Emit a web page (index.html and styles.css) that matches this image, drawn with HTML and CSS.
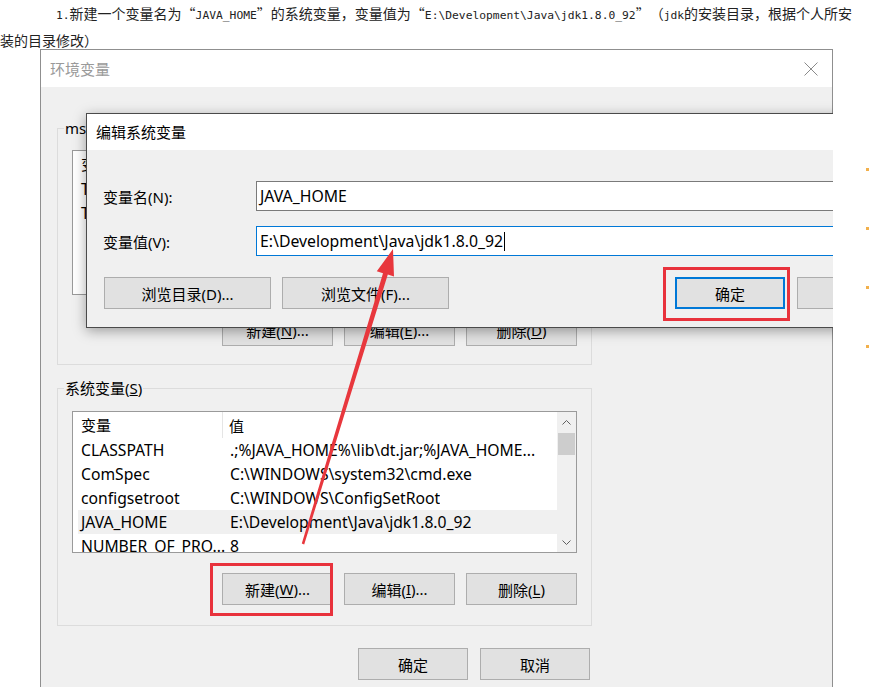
FILE: index.html
```html
<!DOCTYPE html>
<html lang="zh-CN">
<head>
<meta charset="utf-8">
<title>环境变量</title>
<link rel="stylesheet" href="styles.css">
</head>
<body>
<p class="intro"><span class="m">1.</span>新建一个变量名为“<span class="m">JAVA_HOME</span>”的系统变量，变量值为“<span class="m">E:\Development\Java\jdk1.8.0_92</span>”（<span class="m">jdk</span>的安装目录，根据个人所安<br>装的目录修改）</p>
<div class="stage">
  <div class="shot">
    <div class="win">
      <div class="win-title">
        <span class="win-caption">环境变量</span>
        <svg class="close" width="14" height="14" viewBox="0 0 14 14"><path d="M0.5 0.5 L13.5 13.5 M13.5 0.5 L0.5 13.5" stroke="#8a8a8a" stroke-width="1" fill="none"/></svg>
      </div>
      <div class="win-body">
        <div class="group group-user">
          <div class="group-label">mshsbc 的用户变量(<u>U</u>)</div>
          <div class="list list-user">
            <div class="lv-main">
              <div class="lv-head"><span class="c1">变量</span><span class="c2">值</span></div>
              <div class="lv-row"><span class="c1">TEMP</span><span class="c2">%USERPROFILE%\AppData\Local\Temp</span></div>
              <div class="lv-row"><span class="c1">TMP</span><span class="c2">%USERPROFILE%\AppData\Local\Temp</span></div>
            </div>
          </div>
          <div class="btn-row">
            <div class="btn">新建(<u>N</u>)...</div>
            <div class="btn">编辑(<u>E</u>)...</div>
            <div class="btn">删除(<u>D</u>)</div>
          </div>
        </div>
        <div class="group group-sys">
          <div class="group-label">系统变量(<u>S</u>)</div>
          <div class="list list-sys">
            <div class="lv-main">
              <div class="lv-head"><span class="c1">变量</span><span class="c2">值</span></div>
              <div class="lv-row"><span class="c1">CLASSPATH</span><span class="c2">.;%JAVA_HOME%\lib\dt.jar;%JAVA_HOME...</span></div>
              <div class="lv-row"><span class="c1">ComSpec</span><span class="c2">C:\WINDOWS\system32\cmd.exe</span></div>
              <div class="lv-row"><span class="c1">configsetroot</span><span class="c2">C:\WINDOWS\ConfigSetRoot</span></div>
              <div class="lv-row selected"><span class="c1">JAVA_HOME</span><span class="c2">E:\Development\Java\jdk1.8.0_92</span></div>
              <div class="lv-row"><span class="c1">NUMBER_OF_PRO...</span><span class="c2">8</span></div>
            </div>
            <div class="vscroll">
              <div class="sb-arrow"><svg width="9" height="5" viewBox="0 0 9 5"><polyline points="0.5,4.5 4.5,0.5 8.5,4.5" fill="none" stroke="#606060" stroke-width="1"/></svg></div>
              <div class="sb-thumb"></div>
              <div class="sb-track"></div>
              <div class="sb-arrow"><svg width="9" height="5" viewBox="0 0 9 5"><polyline points="0.5,0.5 4.5,4.5 8.5,0.5" fill="none" stroke="#606060" stroke-width="1"/></svg></div>
            </div>
          </div>
          <div class="btn-row">
            <div class="btn">新建(<u>W</u>)...</div>
            <div class="btn">编辑(<u>I</u>)...</div>
            <div class="btn">删除(<u>L</u>)</div>
          </div>
        </div>
        <div class="btn-row footer">
          <div class="btn btn-sm">确定</div>
          <div class="btn btn-sm">取消</div>
        </div>
      </div>
    </div>

    <div class="edit-dlg">
      <div class="edit-title">编辑系统变量</div>
      <div class="edit-body">
        <div class="field">
          <span class="field-label">变量名(N):</span>
          <div class="field-input">JAVA_HOME</div>
        </div>
        <div class="field field-second">
          <span class="field-label">变量值(V):</span>
          <div class="field-input focused">E:\Development\Java\jdk1.8.0_92<span class="caret"></span></div>
        </div>
        <div class="edit-btns">
          <div class="btn btn-wide">浏览目录(D)...</div>
          <div class="btn btn-wide">浏览文件(F)...</div>
          <div class="btn btn-sm btn-default">确定</div>
          <div class="btn btn-sm btn-cancel">取消</div>
        </div>
      </div>
    </div>

    <div class="mark mark-ok"></div>
    <div class="mark mark-new"></div>
    <svg class="arrow" width="793" height="638" viewBox="0 0 793 638">
      <polygon points="261.8,494.6 343.0,224.2 336.8,222.3 353,200 354.0,227.5 347.8,225.6 264.2,495.4" fill="#e8373d"/>
    </svg>
  </div>
  <div class="sidebar"><i></i><i></i><i></i><i></i></div>
</div>
</body>
</html>
```

FILE: styles.css
```css
html, body {
  margin: 0;
  padding: 0;
  background: #ffffff;
}

body {
  font-family: "Noto Sans", "Noto Sans CJK SC", sans-serif;
  color: #000;
}

.intro {
  margin: 0;
  padding-top: 1px;
  height: 48px;
  font-family: "Noto Sans CJK SC", sans-serif;
  font-size: 14px;
  line-height: 24px;
  color: #222;
  text-indent: 56px;
  white-space: nowrap;
  overflow: hidden;
  text-spacing-trim: space-all;
}

.intro .m {
  font-family: "DejaVu Sans Mono", monospace;
  font-size: 11.3px;
}

.stage {
  display: flex;
  align-items: flex-start;
}

.shot {
  position: relative;
  margin-left: 40px;
  width: 793px;
  height: 638px;
  overflow: hidden;
}

.win {
  box-sizing: border-box;
  height: 100%;
  border: 1px solid #8f8f8f;
  border-bottom: none;
  background: #f0f0f0;
  display: flex;
  flex-direction: column;
}

.win-title {
  height: 37px;
  flex: none;
  background: #ffffff;
  display: flex;
  align-items: center;
  justify-content: space-between;
  padding: 0 14px 0 9px;
}

.win-caption {
  font-size: 15px;
  color: #9a9a9a;
}

.win-body {
  padding: 41px 0 0 16px;
}

.group {
  box-sizing: border-box;
  width: 535px;
  border: 1px solid #dcdcdc;
  padding: 0 14px 18px 14px;
}

.group-sys {
  margin-top: 23px;
  padding-bottom: 20px;
}

.group-label {
  margin-top: -11px;
  margin-left: -8px;
  height: 21px;
  line-height: 21px;
  width: fit-content;
  padding: 0 1px;
  background: #f0f0f0;
  font-size: 15px;
}

.list {
  box-sizing: border-box;
  background: #ffffff;
  border: 1px solid #9a9a9a;
  display: flex;
  overflow: hidden;
  font-size: 15.7px;
}

.list-user {
  margin-top: 11px;
  height: 145px;
}

.list-sys {
  margin-top: 12px;
  height: 142px;
}

.lv-main {
  flex: 1;
  min-width: 0;
}

.lv-head,
.lv-row {
  display: flex;
  align-items: center;
  white-space: nowrap;
}

.lv-head {
  height: 26px;
  font-size: 15px;
}

.lv-head .c1 {
  box-sizing: border-box;
  width: 150px;
  padding-left: 8px;
  border-right: 1px solid #e5e5e5;
  height: 26px;
  line-height: 26px;
}

.lv-head .c2 {
  padding-left: 6px;
}

.lv-row {
  height: 24px;
  margin-left: 5px;
}

.lv-row .c1 {
  box-sizing: border-box;
  width: 145px;
  padding-left: 3px;
  flex: none;
}

.lv-row .c2 {
  padding-left: 7px;
  overflow: hidden;
}

.lv-row.selected {
  background: #f0f0f0;
}

.vscroll {
  width: 19px;
  flex: none;
  background: #f0f0f0;
  display: flex;
  flex-direction: column;
}

.sb-arrow {
  height: 20px;
  display: flex;
  align-items: center;
  justify-content: center;
}

.sb-thumb {
  height: 22px;
  margin: 1px 1px 0 1px;
  background: #cdcdcd;
}

.sb-track {
  flex: 1;
}

.btn-row {
  display: flex;
  justify-content: flex-end;
  gap: 11px;
  margin-top: 19px;
}

.group-sys .btn-row {
  margin-top: 20px;
}

.btn {
  box-sizing: border-box;
  width: 111px;
  height: 32px;
  background: #e1e1e1;
  border: 1px solid #adadad;
  display: flex;
  align-items: center;
  justify-content: center;
  font-size: 15px;
  white-space: nowrap;
}

.btn u {
  text-underline-offset: 2px;
}

.footer {
  width: 533px;
  margin-top: 22px;
  gap: 12px;
}

.btn-sm {
  width: 110px;
}

/* edit dialog (window on top) */
.edit-dlg {
  position: absolute;
  left: 46px;
  top: 64px;
  width: 900px;
  border: 1px solid #4a4a4a;
  background: #f0f0f0;
  box-shadow: 0 3px 12px rgba(0, 0, 0, 0.35);
}

.edit-title {
  height: 36px;
  line-height: 36px;
  background: #ffffff;
  padding-left: 9px;
  font-size: 15px;
}

.edit-body {
  padding: 31px 16px 18px 16px;
}

.field {
  display: flex;
  align-items: center;
}

.field-second {
  margin-top: 15px;
}

.field-label {
  width: 153px;
  flex: none;
  font-size: 15px;
}

.field-input {
  box-sizing: border-box;
  flex: 1;
  height: 30px;
  border: 1px solid #7a7a7a;
  background: #ffffff;
  padding-left: 3px;
  display: flex;
  align-items: center;
  font-size: 15.8px;
}

.field-input.focused {
  border-color: #0078d7;
}

.caret {
  width: 1px;
  height: 19px;
  margin-left: 1px;
  background: #000;
}

.edit-btns {
  display: flex;
  margin-top: 21px;
  padding-left: 1px;
  gap: 11px;
}

.btn-wide {
  width: 167px;
}

.btn-default {
  margin-left: 215px;
  border: 2px solid #0078d7;
}

.btn-cancel {
  margin-left: 1px;
}

/* annotations drawn over the screenshot */
.mark {
  position: absolute;
  box-sizing: border-box;
  border: 3px solid #e8323c;
}

.mark-ok {
  left: 623px;
  top: 218px;
  width: 127px;
  height: 54px;
}

.mark-new {
  left: 170px;
  top: 514px;
  width: 123px;
  height: 53px;
}

.arrow {
  position: absolute;
  left: 0;
  top: 0;
  pointer-events: none;
}

.sidebar {
  margin-left: 33px;
  padding-top: 119px;
  display: flex;
  flex-direction: column;
  gap: 56px;
}

.sidebar i {
  display: block;
  width: 3px;
  height: 3px;
  background: #f2b04c;
}
```
